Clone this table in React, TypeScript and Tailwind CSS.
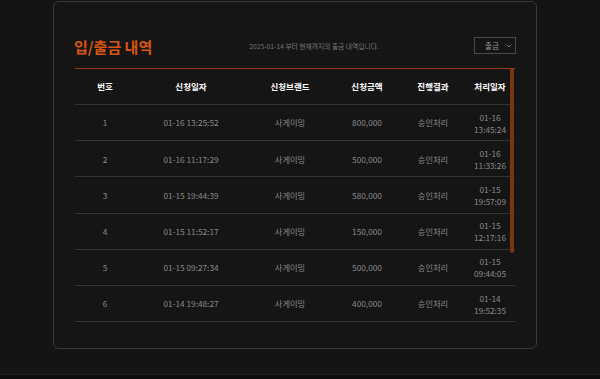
import { ChevronDown } from "lucide-react";

const ROWS = [
  { no: 1, reqAt: "01-16 13:25:52", brand: "사게이밍", amount: "800,000", status: "승인처리", doneDate: "01-16", doneTime: "13:45:24" },
  { no: 2, reqAt: "01-16 11:17:29", brand: "사게이밍", amount: "500,000", status: "승인처리", doneDate: "01-16", doneTime: "11:33:26" },
  { no: 3, reqAt: "01-15 19:44:39", brand: "사게이밍", amount: "580,000", status: "승인처리", doneDate: "01-15", doneTime: "19:57:09" },
  { no: 4, reqAt: "01-15 11:52:17", brand: "사게이밍", amount: "150,000", status: "승인처리", doneDate: "01-15", doneTime: "12:17:16" },
  { no: 5, reqAt: "01-15 09:27:34", brand: "사게이밍", amount: "500,000", status: "승인처리", doneDate: "01-15", doneTime: "09:44:05" },
  { no: 6, reqAt: "01-14 19:48:27", brand: "사게이밍", amount: "400,000", status: "승인처리", doneDate: "01-14", doneTime: "19:52:35" },
];

const HEADERS = ["번호", "신청일자", "신청브랜드", "신청금액", "진행결과", "처리일자"];

const gridCls = "grid grid-cols-[60px_112px_86px_68px_64px_50px] items-center text-center";

export default function App() {
  return (
    <div
      className="flex h-screen flex-col bg-[#141414]"
      style={{ fontFamily: '"Noto Sans CJK KR", "Noto Sans", sans-serif' }}
    >
      <div className="flex-1 pl-[53px] pt-px">
        <div className="w-[484px] rounded-md border border-[#3a3a3a] bg-[#151515] px-[21px] pb-[26px] pt-[30px]">
          {/* title row */}
          <div className="flex h-[29px] items-center">
            <h1 className="-ml-[1px] text-[15px] font-bold leading-none text-[#d9550f]">입/출금 내역</h1>
            <p className="ml-[97px] text-[6.75px] leading-none text-[#777]">
              2025-01-14 부터 현재까지의 출금 내역입니다.
            </p>
            <button
              type="button"
              className="ml-auto mr-[-1px] -mt-[2px] flex h-[17px] w-[42px] items-center justify-between border border-[#4a4a4a] pl-[10px] pr-[2px] text-[7.5px] text-[#999]"
            >
              출금
              <ChevronDown className="h-[8px] w-[8px] text-[#888]" strokeWidth={2.5} />
            </button>
          </div>

          {/* table */}
          <div className="relative mt-[7px] border-t border-[#8b3a12]">
            <div className={`${gridCls} h-[36px] border-b border-[#333] text-[8.5px] font-bold text-white`}>
              {HEADERS.map((h) => (
                <div key={h}>{h}</div>
              ))}
            </div>
            {ROWS.map((r) => (
              <div key={r.no} className={`${gridCls} h-[36.2px] border-b border-[#333] text-[8.25px] text-[#8a8a8a]`}>
                <div>{r.no}</div>
                <div>{r.reqAt}</div>
                <div>{r.brand}</div>
                <div>{r.amount}</div>
                <div>{r.status}</div>
                <div className="leading-[12px]">
                  {r.doneDate}
                  <br />
                  {r.doneTime}
                </div>
              </div>
            ))}
            {/* scrollbar thumb */}
            <div className="absolute right-[1px] top-0 h-[184px] w-[4px] rounded-b-full bg-[#7a3510]" />
          </div>
        </div>
      </div>
      <div className="h-[5px] border-t border-[#222] bg-[#0b0b0b]" />
    </div>
  );
}
